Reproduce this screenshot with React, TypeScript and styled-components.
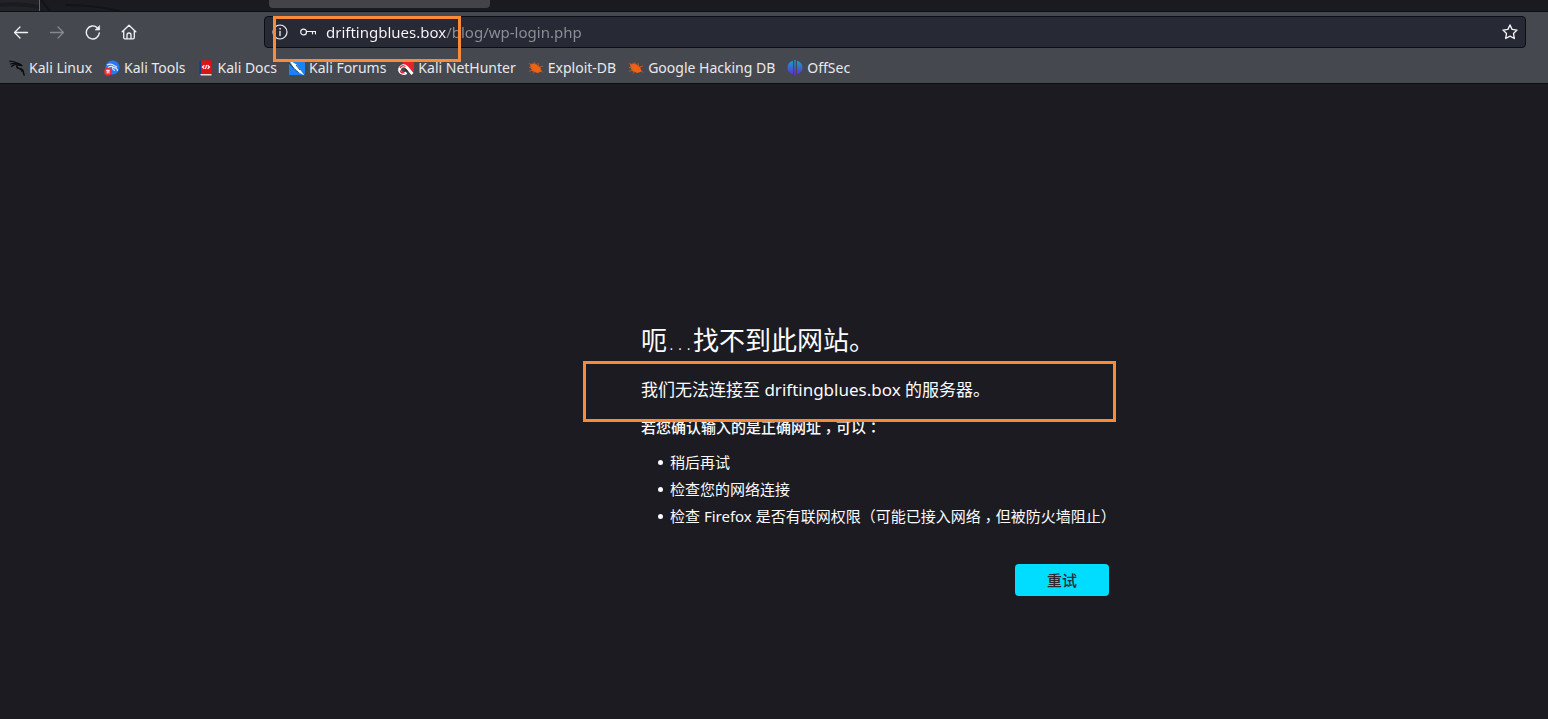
import React from "react";
import styled, { createGlobalStyle } from "styled-components";

const GlobalStyle = createGlobalStyle`
  *, *::before, *::after { box-sizing: border-box; }
  body {
    margin: 0;
    background: #1c1b22;
    color: #fbfbfe;
    font-family: "Noto Sans", "Noto Sans CJK SC", sans-serif;
    font-size: 15px;
  }
`;

const Browser = styled.div`
  display: flex;
  flex-direction: column;
  min-height: 100vh;
`;

const TabStrip = styled.div`
  display: flex;
  position: relative;
  height: 12px;
  padding-left: 269px;
  background: #1a1b20;
  border-bottom: 1px solid #0f1014;
`;

const Wallpaper = styled.svg`
  position: absolute;
  left: 0;
  top: 0;
`;

const ActiveTab = styled.div`
  position: relative;
  width: 221px;
  height: 8px;
  background: #42444a;
  border-radius: 0 0 4px 4px;
`;

const Chrome = styled.header`
  background: #45484e;
  border-bottom: 1px solid #0d0d12;
`;

const Toolbar = styled.div`
  display: flex;
  align-items: center;
  padding: 4px 22px 4px 3px;
`;

const NavButtons = styled.nav`
  display: flex;
  width: 261px;
  flex-shrink: 0;
`;

const IconButton = styled.button<{ $size?: number }>`
  display: grid;
  place-items: center;
  flex-shrink: 0;
  width: ${(p) => p.$size ?? 36}px;
  height: 30px;
  padding: 0;
  border: 0;
  background: none;
  color: #f2f2f5;
  &:disabled { color: #86888c; }
`;

const UrlBar = styled.div`
  position: relative;
  display: flex;
  align-items: center;
  flex: 1;
  min-width: 0;
  height: 32px;
  padding-left: 1px;
  background: #272935;
  border: 1px solid #0d0e14;
  border-radius: 4px;
`;

const Address = styled.input`
  flex: 1;
  min-width: 0;
  height: 30px;
  margin-left: 4px;
  padding: 0;
  border: 0;
  outline: 0;
  font: inherit;
  color: transparent;
  background: linear-gradient(90deg, #fbfbfe 120px, #8f9097 120px);
  -webkit-background-clip: text;
  background-clip: text;
`;

const Bookmarks = styled.div`
  display: flex;
  gap: 12px;
  height: 31px;
  padding-left: 9px;
`;

const Bookmark = styled.a`
  display: flex;
  align-items: center;
  gap: 4px;
  height: 31px;
  font-size: 14px;
  color: #e9e9ec;
  text-decoration: none;
  white-space: nowrap;
`;

const Page = styled.main`
  display: flex;
  justify-content: center;
  padding: 236px 24px 40px;
`;

const ErrorPanel = styled.div`
  width: 670px;
  padding-left: 202px;
`;

const Title = styled.h1`
  margin: 0;
  font-size: 26px;
  line-height: 40px;
  font-weight: 400;
`;

const Ellipsis = styled.span`
  font-family: "DejaVu Sans", sans-serif;
  font-weight: 200;
  line-height: 0;
`;

const Mark = styled.span<{ $low?: boolean }>`
  font-family: "Noto Sans CJK TC", sans-serif;
  line-height: 0;
  vertical-align: ${(p) => (p.$low ? "-4px" : "baseline")};
`;

const Lead = styled.div`
  position: relative;
  margin-top: 16px;
  font-size: 17px;
  line-height: 28px;
`;

const Hint = styled.p`
  margin: 12px 0 0;
  line-height: 22px;
  font-weight: 500;
`;

const Suggestions = styled.ul`
  margin: 11px 0 0;
  padding-left: 17px;
  line-height: 27px;
  list-style: none;
`;

const Suggestion = styled.li`
  white-space: nowrap;
  &::before {
    content: "";
    display: inline-block;
    width: 5px;
    height: 5px;
    margin-right: 7px;
    border-radius: 50%;
    background: #fbfbfe;
    vertical-align: 3px;
  }
`;

const Actions = styled.div`
  display: flex;
  justify-content: flex-end;
  margin-top: 34px;
`;

const RetryButton = styled.button`
  width: 94px;
  height: 32px;
  padding: 0 0 2px;
  border: 0;
  border-radius: 4px;
  background: #00ddff;
  color: #2b2a33;
  font: inherit;
  font-weight: 500;
`;

const Highlight = styled.div<{ $x: number; $y: number; $w: number; $h: number }>`
  position: absolute;
  left: ${(p) => p.$x}px;
  top: ${(p) => p.$y}px;
  width: ${(p) => p.$w}px;
  height: ${(p) => p.$h}px;
  border: 3px solid #f98a37;
  pointer-events: none;
  z-index: 1;
`;

const Glyph = ({ children, width = 1.4 }: { children: React.ReactNode; width?: number }) => (
  <svg width="16" height="16" viewBox="0 0 16 16" fill="none" stroke="currentColor"
    strokeWidth={width} strokeLinecap="round" strokeLinejoin="round" aria-hidden="true">
    {children}
  </svg>
);

const BackIcon = () => <Glyph width={1.3}><path d="M14.5 8.500H1.500M7 3L1.500 8.500L7 14" /></Glyph>;
const ForwardIcon = () => <Glyph width={1.3}><path d="M1.500 8.500H14.500M9 3L14.500 8.500L9 14" /></Glyph>;
const ReloadIcon = () => (
  <Glyph>
    <path d="M14.300 9A6.500 6.500 0 1 1 12.300 3.700L13.800 5" />
    <path d="M14.600 1.800V6H10.400Z" fill="currentColor" strokeWidth=".6" />
  </Glyph>
);
const HomeIcon = () => (
  <Glyph width={1.3}>
    <path d="M1.200 7.800L8 1.200L14.800 7.800M2.700 6.500V13.500Q2.700 14.800 4 14.800H12Q13.300 14.800 13.300 13.500V6.500" />
    <path d="M6 14.500V11Q6 9 8 9T10 11V14.500" />
  </Glyph>
);
const StarIcon = () => (
  <Glyph>
    <path d="M8 1L10.100 5.400L15 6.100L11.500 9.500L12.300 14.500L8 12.200L3.700 14.500L4.500 9.500L1 6.100L5.900 5.400Z" />
  </Glyph>
);
const InfoIcon = () => (
  <Glyph width={1.2}>
    <circle cx="8" cy="8" r="7" />
    <path d="M8 7.500V11.500" strokeWidth="1.300" />
    <circle cx="8" cy="4.800" r=".5" fill="currentColor" strokeWidth=".6" />
  </Glyph>
);
const KeyIcon = () => (
  <Glyph width={1.2}>
    <circle cx="3.600" cy="8" r="2.900" />
    <path d="M6.500 7.500H15.500V9.800M12.500 7.500V9.800" />
  </Glyph>
);

const Favicon = ({ children }: { children: React.ReactNode }) => (
  <svg width="16" height="16" viewBox="0 0 16 16" aria-hidden="true">{children}</svg>
);

const KaliIcon = () => (
  <Favicon>
    <g fill="none" stroke="#0b0c0f" strokeLinecap="round" strokeLinejoin="round">
      <path d="M.8 1.200Q5 1.300 9.400 3.500M1.500 4Q5 2.600 9.300 4M2.500 6.500Q4.500 4.500 8 4.200" strokeWidth="1.200" />
      <path d="M9 3.500Q11 3.800 12.800 5.500L11 5.200Q8 4.500 7.700 6.400Q7.800 8.200 11 8.700Q14.600 9.500 14.300 12.500L15.200 15" strokeWidth="1.500" />
      <path d="M10.500 8.700Q13 10 12.800 11.500" strokeWidth="1" />
    </g>
  </Favicon>
);
const ToolsIcon = () => (
  <Favicon>
    <circle cx="8.500" cy="7.500" r="7" fill="#2878f5" />
    <path d="M3 5Q7 3 10 5.500L13 7M4 7.500Q7 5.500 9.500 7.300Q13.500 8 13.500 11M8.800 7.500Q8 9.500 11 10.500" fill="none" stroke="#dceaff" strokeWidth="1.200" />
    <circle cx="4" cy="11.700" r="3.900" fill="#ed2b32" />
    <path d="M2.200 10.300H5.800M3.200 10.300V13.500M4.900 10.300V13.500" stroke="#fff" fill="none" />
  </Favicon>
);
const DocsIcon = () => (
  <Favicon>
    <path d="M1.500 1L4 .3V15L1.500 14Z" fill="#173b83" />
    <path d="M3 .3H13.500V14H3Z" fill="#dd1218" />
    <path d="M2 14H13.500V15.500H3Z" fill="#e7d9d7" />
    <path d="M6.400 5.200L4.500 7L6.400 8.800M9.600 5.200L11.500 7L9.600 8.800M8.600 5L7.400 9" fill="none" stroke="#fff" strokeWidth="1.200" />
  </Favicon>
);
const ForumsIcon = () => (
  <Favicon>
    <path d="M3 0H14Q16 0 16 2V13Q16 15 14 15H0V3Z" fill="#1983f5" />
    <path d="M0 0L7.500 4.500L11 9.500L15.500 15.500L9 12L5.500 9Z" fill="#fff" />
    <path d="M0 3L6 9.500L9.500 12.500M7 5L11 10" fill="none" stroke="#263342" strokeWidth=".9" />
  </Favicon>
);
const NetHunterIcon = () => (
  <Favicon>
    <path d="M4 1Q5 0 7 0H14.500Q16 0 16 2V12L11 8L5 4Z" fill="#ec2028" />
    <path d="M14.500 14L9 7.500Q6 4.500 3 6.800Q0 10 3 12.700Q5.700 14.500 8.500 12.700" fill="none" stroke="#fff" strokeWidth="2.800" />
    <path d="M5.500 9.500L8.500 9L10.500 12L7.500 11.500Z" fill="#2c3036" />
    <path d="M2 8Q4 4.500 7.500 6.500M2.200 10.500Q3 13.500 6.500 12.800" fill="none" stroke="#dc1f2a" strokeWidth="1.200" />
  </Favicon>
);
const BugIcon = () => (
  <Favicon>
    <path d="M2 4.500Q5 2.800 8.300 4.200L12.300 7.500L13.500 11.500L9.500 13L4.500 11.300L3 8.500Z" fill="#ee6213" />
    <path d="M.8 3.500L5 5M6 2L8 5M10 3L10.500 7M11.500 7L15 6M12.500 10L15 12.500M1 7.500H4M1 11.300L5 9.800M5 13.500L7 11" stroke="#c45f2a" strokeWidth=".8" fill="none" />
  </Favicon>
);
const OffSecIcon = () => (
  <Favicon>
    <defs>
      <linearGradient id="offsec" x1="0" y1="0" x2="0" y2="16" gradientUnits="userSpaceOnUse">
        <stop stopColor="#10a6c8" /><stop offset="1" stopColor="#6a22dc" />
      </linearGradient>
    </defs>
    <g fill="url(#offsec)">
      <path d="M6 .8V13.500Q4.500 14.500 3.500 13Q.5 11.500 .5 7.500Q.5 2.500 6 .8Z" />
      <path d="M10 .8V13.500Q11.500 14.500 12.500 13Q15.500 11.500 15.500 7.500Q15.500 2.500 10 .8Z" />
      <path d="M7.300 0H8.700V15.500H7.300Z" />
    </g>
  </Favicon>
);

const bookmarks = [
  { label: "Kali Linux", Icon: KaliIcon },
  { label: "Kali Tools", Icon: ToolsIcon },
  { label: "Kali Docs", Icon: DocsIcon },
  { label: "Kali Forums", Icon: ForumsIcon },
  { label: "Kali NetHunter", Icon: NetHunterIcon },
  { label: "Exploit-DB", Icon: BugIcon },
  { label: "Google Hacking DB", Icon: BugIcon },
  { label: "OffSec", Icon: OffSecIcon },
];

export default function App() {
  return (
    <Browser>
      <GlobalStyle />
      <TabStrip>
        <Wallpaper width="160" height="11" viewBox="0 0 160 11" aria-hidden="true">
          <path d="M0 0H39V5Q20 1 0 3ZM0 7Q20 5 39 9V11H0Z" fill="#212327" />
          <path d="M41 0L50 11M65 5Q95 5 120 11" stroke="#121418" strokeWidth="2" fill="none" />
          <path d="M39.500 0V11" stroke="#62646a" />
        </Wallpaper>
        <ActiveTab />
      </TabStrip>
      <Chrome>
        <Toolbar>
          <NavButtons aria-label="导航">
            <IconButton aria-label="后退"><BackIcon /></IconButton>
            <IconButton aria-label="前进" disabled><ForwardIcon /></IconButton>
            <IconButton aria-label="刷新"><ReloadIcon /></IconButton>
            <IconButton aria-label="主页"><HomeIcon /></IconButton>
          </NavButtons>
          <UrlBar>
            <IconButton $size={28} aria-label="网站信息"><InfoIcon /></IconButton>
            <IconButton $size={28} aria-label="登录信息"><KeyIcon /></IconButton>
            <Address aria-label="地址" defaultValue="driftingblues.box/blog/wp-login.php" spellCheck={false} />
            <IconButton $size={30} aria-label="添加书签"><StarIcon /></IconButton>
            <Highlight $x={8} $y={-1} $w={188} $h={46} />
          </UrlBar>
        </Toolbar>
        <Bookmarks>
          {bookmarks.map(({ label, Icon }) => (
            <Bookmark href="#" key={label}><Icon />{label}</Bookmark>
          ))}
        </Bookmarks>
      </Chrome>
      <Page>
        <ErrorPanel>
          <Title>呃<Ellipsis>…</Ellipsis>找不到此网站。</Title>
          <Lead>
            我们无法连接至 driftingblues.box 的服务器。
            <Highlight $x={-58} $y={-15} $w={533} $h={61} />
          </Lead>
          <Hint>
            若您确认输入的是正确网址<Mark $low>，</Mark>可以<Mark>：</Mark>
          </Hint>
          <Suggestions>
            <Suggestion>稍后再试</Suggestion>
            <Suggestion>检查您的网络连接</Suggestion>
            <Suggestion>
              检查 Firefox 是否有联网权限（可能已接入网络<Mark $low>，</Mark>但被防火墙阻止）
            </Suggestion>
          </Suggestions>
          <Actions><RetryButton>重试</RetryButton></Actions>
        </ErrorPanel>
      </Page>
    </Browser>
  );
}
